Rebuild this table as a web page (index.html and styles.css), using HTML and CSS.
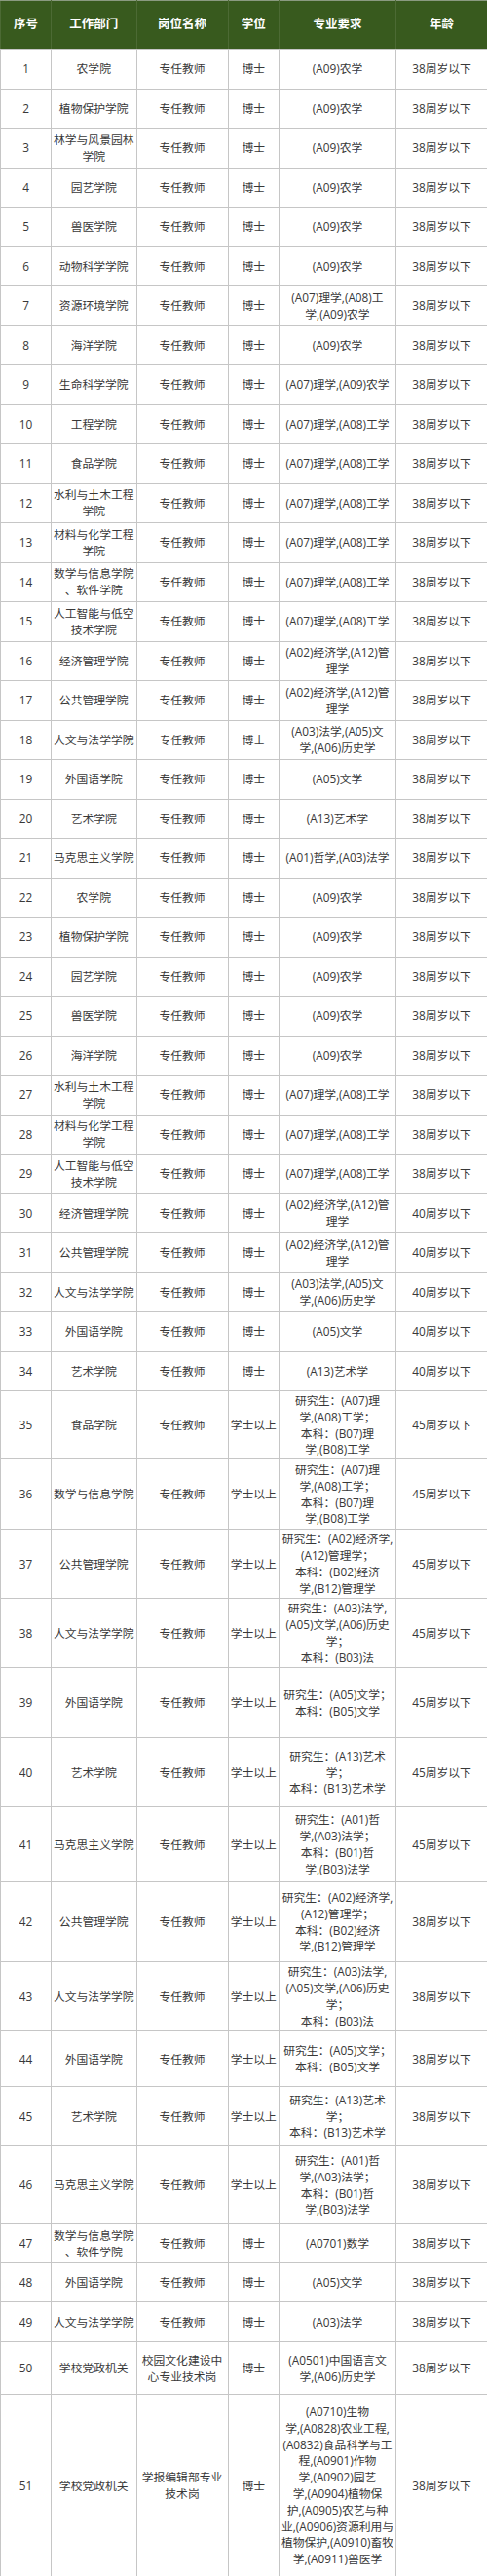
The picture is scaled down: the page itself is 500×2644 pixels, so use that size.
FILE: index.html
```html
<!DOCTYPE html>
<html lang="zh-CN">
<head>
<meta charset="utf-8">
<title>岗位表</title>
<link rel="stylesheet" href="styles.css">
</head>
<body>
<table class="jobs">
<colgroup>
<col class="c-no"><col class="c-dept"><col class="c-post"><col class="c-deg"><col class="c-major"><col class="c-age">
</colgroup>
<thead>
<tr class="head"><th>序号</th><th>工作部门</th><th>岗位名称</th><th>学位</th><th>专业要求</th><th>年龄</th></tr>
</thead>
<tbody>
<tr class="h-std"><td>1</td><td>农学院</td><td>专任教师</td><td>博士</td><td>(A09)农学</td><td>38周岁以下</td></tr>
<tr class="h-std"><td>2</td><td>植物保护学院</td><td>专任教师</td><td>博士</td><td>(A09)农学</td><td>38周岁以下</td></tr>
<tr class="h-std"><td>3</td><td>林学与风景园林<br>学院</td><td>专任教师</td><td>博士</td><td>(A09)农学</td><td>38周岁以下</td></tr>
<tr class="h-std"><td>4</td><td>园艺学院</td><td>专任教师</td><td>博士</td><td>(A09)农学</td><td>38周岁以下</td></tr>
<tr class="h-std"><td>5</td><td>兽医学院</td><td>专任教师</td><td>博士</td><td>(A09)农学</td><td>38周岁以下</td></tr>
<tr class="h-std"><td>6</td><td>动物科学学院</td><td>专任教师</td><td>博士</td><td>(A09)农学</td><td>38周岁以下</td></tr>
<tr class="h-std"><td>7</td><td>资源环境学院</td><td>专任教师</td><td>博士</td><td>(A07)理学,(A08)工<br>学,(A09)农学</td><td>38周岁以下</td></tr>
<tr class="h-std"><td>8</td><td>海洋学院</td><td>专任教师</td><td>博士</td><td>(A09)农学</td><td>38周岁以下</td></tr>
<tr class="h-std"><td>9</td><td>生命科学学院</td><td>专任教师</td><td>博士</td><td>(A07)理学,(A09)农学</td><td>38周岁以下</td></tr>
<tr class="h-std"><td>10</td><td>工程学院</td><td>专任教师</td><td>博士</td><td>(A07)理学,(A08)工学</td><td>38周岁以下</td></tr>
<tr class="h-std"><td>11</td><td>食品学院</td><td>专任教师</td><td>博士</td><td>(A07)理学,(A08)工学</td><td>38周岁以下</td></tr>
<tr class="h-std"><td>12</td><td>水利与土木工程<br>学院</td><td>专任教师</td><td>博士</td><td>(A07)理学,(A08)工学</td><td>38周岁以下</td></tr>
<tr class="h-std"><td>13</td><td>材料与化学工程<br>学院</td><td>专任教师</td><td>博士</td><td>(A07)理学,(A08)工学</td><td>38周岁以下</td></tr>
<tr class="h-std"><td>14</td><td>数学与信息学院<br>、软件学院</td><td>专任教师</td><td>博士</td><td>(A07)理学,(A08)工学</td><td>38周岁以下</td></tr>
<tr class="h-std"><td>15</td><td>人工智能与低空<br>技术学院</td><td>专任教师</td><td>博士</td><td>(A07)理学,(A08)工学</td><td>38周岁以下</td></tr>
<tr class="h-std"><td>16</td><td>经济管理学院</td><td>专任教师</td><td>博士</td><td>(A02)经济学,(A12)管<br>理学</td><td>38周岁以下</td></tr>
<tr class="h-std"><td>17</td><td>公共管理学院</td><td>专任教师</td><td>博士</td><td>(A02)经济学,(A12)管<br>理学</td><td>38周岁以下</td></tr>
<tr class="h-std"><td>18</td><td>人文与法学学院</td><td>专任教师</td><td>博士</td><td>(A03)法学,(A05)文<br>学,(A06)历史学</td><td>38周岁以下</td></tr>
<tr class="h-std"><td>19</td><td>外国语学院</td><td>专任教师</td><td>博士</td><td>(A05)文学</td><td>38周岁以下</td></tr>
<tr class="h-std"><td>20</td><td>艺术学院</td><td>专任教师</td><td>博士</td><td>(A13)艺术学</td><td>38周岁以下</td></tr>
<tr class="h-std"><td>21</td><td>马克思主义学院</td><td>专任教师</td><td>博士</td><td>(A01)哲学,(A03)法学</td><td>38周岁以下</td></tr>
<tr class="h-std"><td>22</td><td>农学院</td><td>专任教师</td><td>博士</td><td>(A09)农学</td><td>38周岁以下</td></tr>
<tr class="h-std"><td>23</td><td>植物保护学院</td><td>专任教师</td><td>博士</td><td>(A09)农学</td><td>38周岁以下</td></tr>
<tr class="h-std"><td>24</td><td>园艺学院</td><td>专任教师</td><td>博士</td><td>(A09)农学</td><td>38周岁以下</td></tr>
<tr class="h-std"><td>25</td><td>兽医学院</td><td>专任教师</td><td>博士</td><td>(A09)农学</td><td>38周岁以下</td></tr>
<tr class="h-std"><td>26</td><td>海洋学院</td><td>专任教师</td><td>博士</td><td>(A09)农学</td><td>38周岁以下</td></tr>
<tr class="h-std"><td>27</td><td>水利与土木工程<br>学院</td><td>专任教师</td><td>博士</td><td>(A07)理学,(A08)工学</td><td>38周岁以下</td></tr>
<tr class="h-std"><td>28</td><td>材料与化学工程<br>学院</td><td>专任教师</td><td>博士</td><td>(A07)理学,(A08)工学</td><td>38周岁以下</td></tr>
<tr class="h-std"><td>29</td><td>人工智能与低空<br>技术学院</td><td>专任教师</td><td>博士</td><td>(A07)理学,(A08)工学</td><td>38周岁以下</td></tr>
<tr class="h-std"><td>30</td><td>经济管理学院</td><td>专任教师</td><td>博士</td><td>(A02)经济学,(A12)管<br>理学</td><td>40周岁以下</td></tr>
<tr class="h-std"><td>31</td><td>公共管理学院</td><td>专任教师</td><td>博士</td><td>(A02)经济学,(A12)管<br>理学</td><td>40周岁以下</td></tr>
<tr class="h-std"><td>32</td><td>人文与法学学院</td><td>专任教师</td><td>博士</td><td>(A03)法学,(A05)文<br>学,(A06)历史学</td><td>40周岁以下</td></tr>
<tr class="h-std"><td>33</td><td>外国语学院</td><td>专任教师</td><td>博士</td><td>(A05)文学</td><td>40周岁以下</td></tr>
<tr class="h-std"><td>34</td><td>艺术学院</td><td>专任教师</td><td>博士</td><td>(A13)艺术学</td><td>40周岁以下</td></tr>
<tr class="h70"><td>35</td><td>食品学院</td><td>专任教师</td><td>学士以上</td><td>研究生：(A07)理<br>学,(A08)工学；<br>本科：(B07)理<br>学,(B08)工学</td><td>45周岁以下</td></tr>
<tr class="h72"><td>36</td><td>数学与信息学院</td><td>专任教师</td><td>学士以上</td><td>研究生：(A07)理<br>学,(A08)工学；<br>本科：(B07)理<br>学,(B08)工学</td><td>45周岁以下</td></tr>
<tr class="h71"><td>37</td><td>公共管理学院</td><td>专任教师</td><td>学士以上</td><td>研究生：(A02)经济学,<br>(A12)管理学；<br>本科：(B02)经济<br>学,(B12)管理学</td><td>45周岁以下</td></tr>
<tr class="h71"><td>38</td><td>人文与法学学院</td><td>专任教师</td><td>学士以上</td><td>研究生：(A03)法学,<br>(A05)文学,(A06)历史<br>学；<br>本科：(B03)法</td><td>45周岁以下</td></tr>
<tr class="h72"><td>39</td><td>外国语学院</td><td>专任教师</td><td>学士以上</td><td>研究生：(A05)文学；<br>本科：(B05)文学</td><td>45周岁以下</td></tr>
<tr class="h71"><td>40</td><td>艺术学院</td><td>专任教师</td><td>学士以上</td><td>研究生：(A13)艺术<br>学；<br>本科：(B13)艺术学</td><td>45周岁以下</td></tr>
<tr class="h77"><td>41</td><td>马克思主义学院</td><td>专任教师</td><td>学士以上</td><td>研究生：(A01)哲<br>学,(A03)法学；<br>本科：(B01)哲<br>学,(B03)法学</td><td>45周岁以下</td></tr>
<tr class="h82"><td>42</td><td>公共管理学院</td><td>专任教师</td><td>学士以上</td><td>研究生：(A02)经济学,<br>(A12)管理学；<br>本科：(B02)经济<br>学,(B12)管理学</td><td>38周岁以下</td></tr>
<tr class="h71"><td>43</td><td>人文与法学学院</td><td>专任教师</td><td>学士以上</td><td>研究生：(A03)法学,<br>(A05)文学,(A06)历史<br>学；<br>本科：(B03)法</td><td>38周岁以下</td></tr>
<tr class="h57"><td>44</td><td>外国语学院</td><td>专任教师</td><td>学士以上</td><td>研究生：(A05)文学；<br>本科：(B05)文学</td><td>38周岁以下</td></tr>
<tr class="h61"><td>45</td><td>艺术学院</td><td>专任教师</td><td>学士以上</td><td>研究生：(A13)艺术<br>学；<br>本科：(B13)艺术学</td><td>38周岁以下</td></tr>
<tr class="h80"><td>46</td><td>马克思主义学院</td><td>专任教师</td><td>学士以上</td><td>研究生：(A01)哲<br>学,(A03)法学；<br>本科：(B01)哲<br>学,(B03)法学</td><td>38周岁以下</td></tr>
<tr class="h40"><td>47</td><td>数学与信息学院<br>、软件学院</td><td>专任教师</td><td>博士</td><td>(A0701)数学</td><td>38周岁以下</td></tr>
<tr class="h40"><td>48</td><td>外国语学院</td><td>专任教师</td><td>博士</td><td>(A05)文学</td><td>38周岁以下</td></tr>
<tr class="h41"><td>49</td><td>人文与法学学院</td><td>专任教师</td><td>博士</td><td>(A03)法学</td><td>38周岁以下</td></tr>
<tr class="h54"><td>50</td><td>学校党政机关</td><td>校园文化建设中<br>心专业技术岗</td><td>博士</td><td>(A0501)中国语言文<br>学,(A06)历史学</td><td>38周岁以下</td></tr>
<tr class="h187"><td>51</td><td>学校党政机关</td><td>学报编辑部专业<br>技术岗</td><td>博士</td><td>(A0710)生物<br>学,(A0828)农业工程,<br>(A0832)食品科学与工<br>程,(A0901)作物<br>学,(A0902)园艺<br>学,(A0904)植物保<br>护,(A0905)农艺与种<br>业,(A0906)资源利用与<br>植物保护,(A0910)畜牧<br>学,(A0911)兽医学</td><td>38周岁以下</td></tr>
</tbody>
</table>
</body>
</html>
```

FILE: styles.css
```css
html, body {
  margin: 0;
  padding: 0;
  background: #ffffff;
}

.jobs {
  width: 500px;
  table-layout: fixed;
  border-collapse: collapse;
  font-family: "Open Sans", "Noto Sans CJK SC", sans-serif;
  font-size: 11.8px;
  line-height: 16.8px;
  color: #383838;
}

.c-no { width: 52px; }
.c-dept { width: 87.5px; }
.c-post { width: 94px; }
.c-deg { width: 52.5px; }
.c-major { width: 120px; }
.c-age { width: 94px; }

.jobs th,
.jobs td {
  padding: 0 1px;
  text-align: center;
  vertical-align: middle;
  overflow: hidden;
}

.jobs td {
  border: 1px solid #c6c6c6;
}

.jobs th {
  background: #385a1e;
  color: #ffffff;
  font-weight: 700;
  font-size: 12.5px;
  border-top: 1px solid #8a9a80;
  border-left: 1px solid #4c6a34;
  border-right: 1px solid #4c6a34;
  border-bottom: 1px solid #c6c6c6;
}

.head { height: 50px; }
.h-std { height: 40.5px; }
.h40 { height: 40px; }
.h41 { height: 41px; }
.h54 { height: 54px; }
.h57 { height: 57px; }
.h61 { height: 61px; }
.h70 { height: 70px; }
.h71 { height: 71px; }
.h72 { height: 72px; }
.h77 { height: 77px; }
.h80 { height: 80px; }
.h82 { height: 82px; }
.h187 { height: 187px; }
```
